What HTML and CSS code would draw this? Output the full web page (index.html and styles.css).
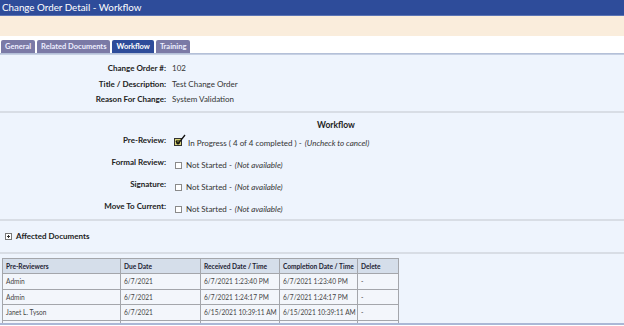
FILE: index.html
```html
<!DOCTYPE html>
<html>
<head>
<meta charset="utf-8">
<link rel="stylesheet" href="styles.css">
</head>
<body>
<div class="titlebar">Change Order Detail - Workflow</div>
<div class="notice"></div>
<div class="tabs">
  <span class="tab">General</span>
  <span class="tab">Related Documents</span>
  <span class="tab active">Workflow</span>
  <span class="tab">Training</span>
</div>
<div class="panel">
  <div class="info">
    <div class="lbl">Change Order #:</div><div class="val">102</div>
    <div class="lbl">Title / Description:</div><div class="val">Test Change Order</div>
    <div class="lbl">Reason For Change:</div><div class="val">System Validation</div>
  </div>
  <div class="sep"></div>
  <div class="wf">
    <div></div><div class="wf-head">Workflow</div>
    <div class="lbl">Pre-Review:</div>
    <div class="val step"><svg class="chk" width="13" height="13" viewBox="0 0 13 13"><rect x="0.5" y="4.5" width="7" height="7" fill="#d8d27a" stroke="#333" stroke-width="1"/><rect x="2" y="6" width="4" height="4" fill="#6b6b2e"/><path d="M2 7 L4 10 L11 1" fill="none" stroke="#111" stroke-width="1.3"/></svg>In Progress ( 4 of 4 completed ) - <i>(Uncheck to cancel)</i></div>
    <div class="lbl">Formal Review:</div>
    <div class="val step"><span class="box"></span>Not Started - <i>(Not available)</i></div>
    <div class="lbl">Signature:</div>
    <div class="val step"><span class="box"></span>Not Started - <i>(Not available)</i></div>
    <div class="lbl">Move To Current:</div>
    <div class="val step"><span class="box"></span>Not Started - <i>(Not available)</i></div>
  </div>
  <div class="sep"></div>
  <div class="affected"><span class="plus"></span>Affected Documents</div>
  <div class="sep"></div>
  <table class="grid">
    <colgroup><col class="c1"><col class="c2"><col class="c3"><col class="c4"><col class="c5"></colgroup>
    <tr><th>Pre-Reviewers</th><th>Due Date</th><th>Received Date / Time</th><th>Completion Date / Time</th><th>Delete</th></tr>
    <tr><td>Admin</td><td>6/7/2021</td><td>6/7/2021 1:23:40 PM</td><td>6/7/2021 1:23:40 PM</td><td>-</td></tr>
    <tr><td>Admin</td><td>6/7/2021</td><td>6/7/2021 1:24:17 PM</td><td>6/7/2021 1:24:17 PM</td><td>-</td></tr>
    <tr><td>Janet L. Tyson</td><td>6/7/2021</td><td>6/15/2021 10:39:11 AM</td><td>6/15/2021 10:39:11 AM</td><td>-</td></tr>
    <tr class="cut"><td></td><td></td><td></td><td></td><td></td></tr>
  </table>
</div>
</body>
</html>
```
FILE: styles.css
```css
html, body { margin: 0; padding: 0; }
body {
  width: 624px;
  height: 326px;
  overflow: hidden;
  background: #fff;
  font-family: "Lato", "Open Sans", sans-serif;
  color: #222;
}
.titlebar {
  height: 15px;
  background: #2e4c9a;
  border-bottom: 1px solid #5b74b4;
  color: #fff;
  font-size: 9.8px;
  line-height: 14px;
  padding-left: 2px;
}
.notice {
  height: 20px;
  background: #faeddc;
}
.tabs {
  height: 18px;
  display: flex;
  align-items: flex-end;
  gap: 2px;
  padding-left: 1px;
  border-bottom: 1px solid #b4c0d8;
  box-sizing: border-box;
}
.tab {
  height: 13px;
  line-height: 13px;
  padding: 0 4px;
  background: #7b7aa6;
  color: #eef;
  font-size: 7.5px;
  font-weight: bold;
  border-radius: 2px 2px 0 0;
}
.tab.active { background: #2e4c9a; color: #fff; }
.panel {
  background: #eef4fd;
  height: 268px;
  border-top: 1px solid #c6d0e3;
  border-bottom: 2px solid #aab8d6;
  overflow: hidden;
}
.info {
  display: grid;
  grid-template-columns: 166px auto;
  column-gap: 6px;
  row-gap: 0;
  padding-top: 6px;
  font-size: 8px;
  line-height: 15.5px;
}
.lbl { text-align: right; font-weight: bold; color: #222; }
.val { color: #333; }
.val i { color: #333; }
.sep { height: 2px; background: #d8dde5; }
.info + .sep { margin-top: 3px; }
.wf {
  display: grid;
  grid-template-columns: 166px auto;
  column-gap: 6px;
  font-size: 8px;
  line-height: 11px;
  padding-top: 7px;
  padding-bottom: 4px;
  row-gap: 8px;
}
.wf-head { font-weight: bold; font-size: 8.5px; padding-left: 145px; margin-bottom: -4px; }
.step { display: flex; align-items: center; padding-top: 3px; }
.step i { margin-left: 3px; }
.chk { margin: -6px 1px 0 2px; flex: none; }
.box {
  width: 5px; height: 5px;
  border: 1px solid #8a8a8a;
  background: #fff;
  margin: 0 4px 0 3px;
  flex: none;
}
.affected {
  display: flex;
  align-items: center;
  font-weight: bold;
  font-size: 8px;
  height: 31px;
  padding-left: 5px;
}
.plus {
  width: 5px; height: 5px;
  border: 1px solid #777;
  margin-right: 4px;
  position: relative;
  background: #fff;
}
.plus::before { content: ""; position: absolute; left: 1px; right: 1px; top: 2px; height: 1px; background: #333; }
.plus::after { content: ""; position: absolute; top: 1px; bottom: 1px; left: 2px; width: 1px; background: #333; }
.grid {
  margin: 4px 0 0 2px;
  border-collapse: collapse;
  font-size: 6.6px;
  width: 396px;
  table-layout: fixed;
}
.c1 { width: 118px; } .c2 { width: 80px; } .c3 { width: 79px; } .c4 { width: 78px; } .c5 { width: 41px; }
.grid th, .grid td {
  border: 1px solid #a4a6ab;
  height: 14.5px;
  padding: 0 3px;
  text-align: left;
  white-space: nowrap;
}
.grid th { background: #d5deea; font-weight: bold; color: #223; }
.grid td { background: #f3f6fb; color: #444; }
```
